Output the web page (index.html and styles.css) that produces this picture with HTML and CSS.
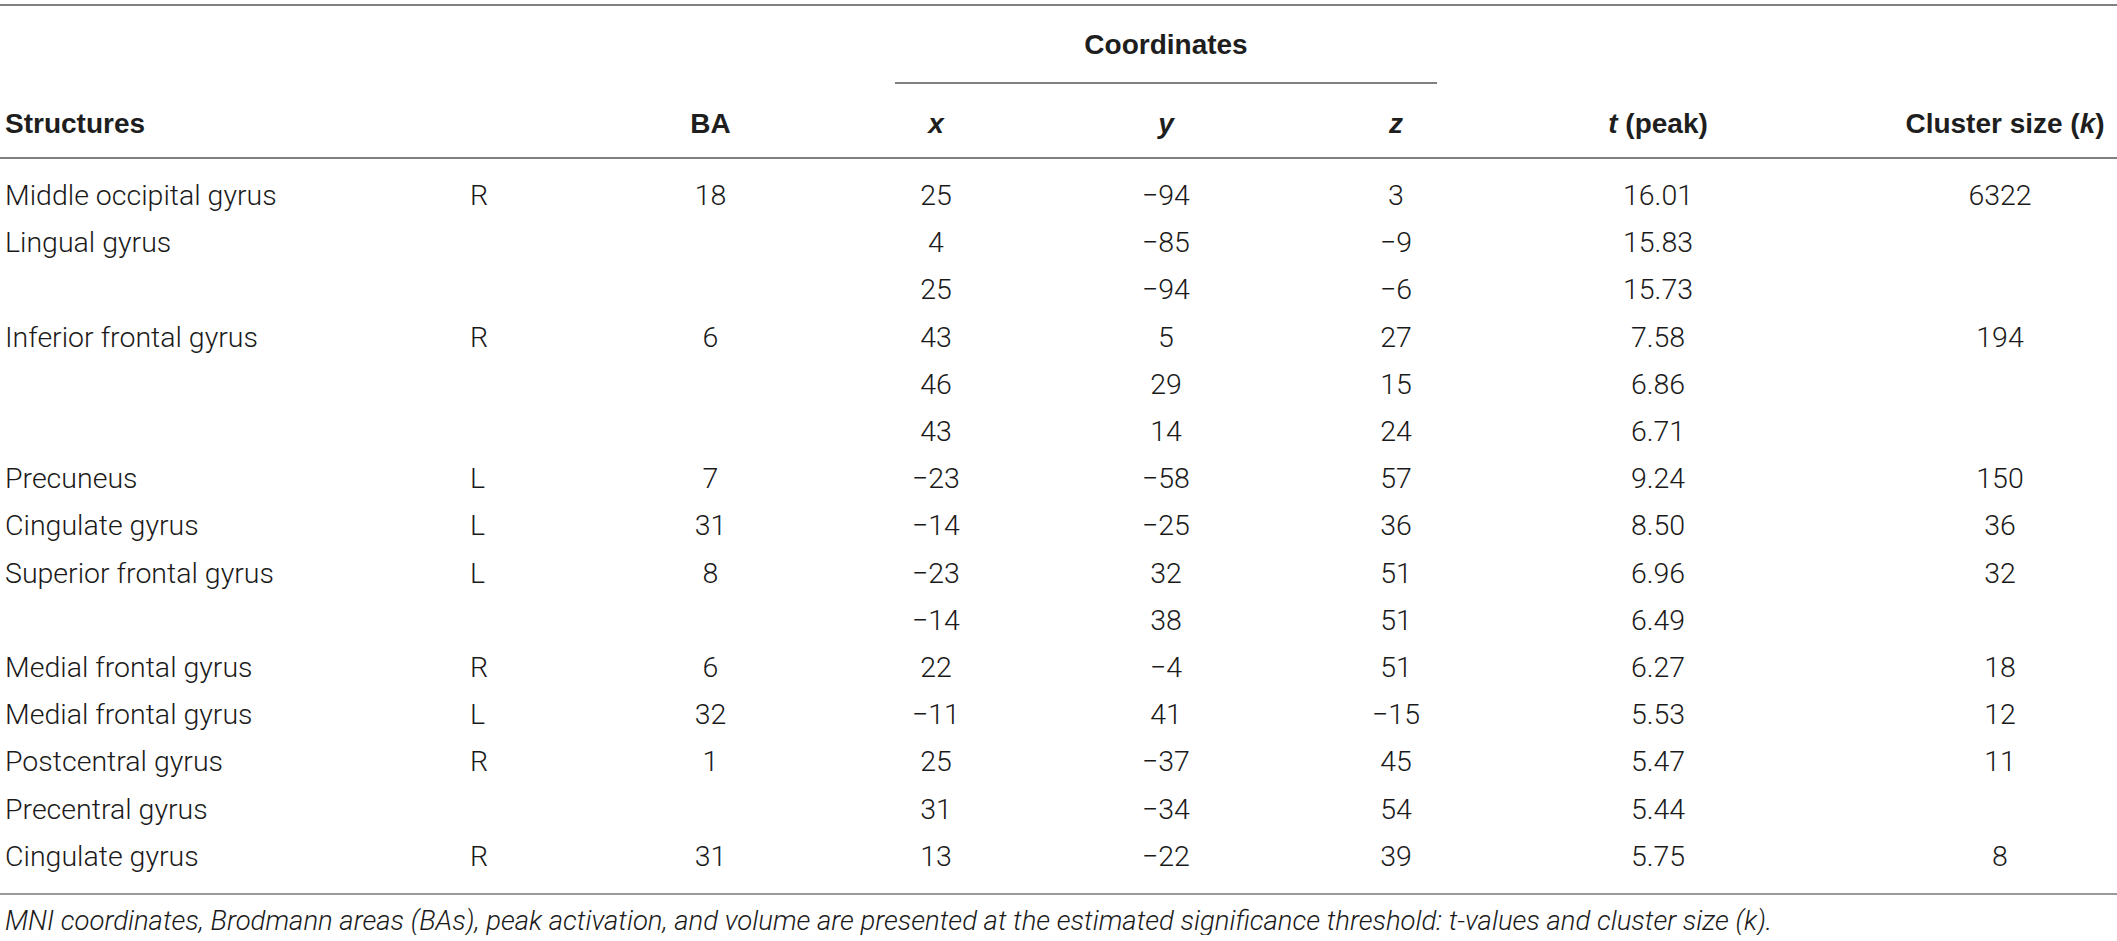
FILE: index.html
```html
<!DOCTYPE html>
<html lang="en">
<head>
<meta charset="utf-8">
<title>Activation clusters</title>
<link rel="stylesheet" href="styles.css">
</head>
<body>
<table class="results">
  <colgroup>
    <col class="c-name">
    <col class="c-hemi">
    <col class="c-ba">
    <col class="c-axis">
    <col class="c-axis">
    <col class="c-axis">
    <col class="c-t">
    <col class="c-k">
  </colgroup>
  <thead>
    <tr>
      <th rowspan="2" class="tall name-head">Structures</th>
      <th rowspan="2" class="tall"></th>
      <th rowspan="2" class="tall">BA</th>
      <th colspan="3" class="coord-group"><div class="coord-label">Coordinates</div></th>
      <th rowspan="2" class="tall"><i>t</i> (peak)</th>
      <th rowspan="2" class="tall k-head">Cluster size (<i>k</i>)</th>
    </tr>
    <tr>
      <th class="axis">x</th>
      <th class="axis">y</th>
      <th class="axis">z</th>
    </tr>
  </thead>
  <tbody>
    <tr><td class="name">Middle occipital gyrus</td><td class="hemi">R</td><td>18</td><td>25</td><td>&minus;94</td><td>3</td><td>16.01</td><td class="k">6322</td></tr>
    <tr><td class="name">Lingual gyrus</td><td class="hemi"></td><td></td><td>4</td><td>&minus;85</td><td>&minus;9</td><td>15.83</td><td class="k"></td></tr>
    <tr><td class="name"></td><td class="hemi"></td><td></td><td>25</td><td>&minus;94</td><td>&minus;6</td><td>15.73</td><td class="k"></td></tr>
    <tr><td class="name">Inferior frontal gyrus</td><td class="hemi">R</td><td>6</td><td>43</td><td>5</td><td>27</td><td>7.58</td><td class="k">194</td></tr>
    <tr><td class="name"></td><td class="hemi"></td><td></td><td>46</td><td>29</td><td>15</td><td>6.86</td><td class="k"></td></tr>
    <tr><td class="name"></td><td class="hemi"></td><td></td><td>43</td><td>14</td><td>24</td><td>6.71</td><td class="k"></td></tr>
    <tr><td class="name">Precuneus</td><td class="hemi">L</td><td>7</td><td>&minus;23</td><td>&minus;58</td><td>57</td><td>9.24</td><td class="k">150</td></tr>
    <tr><td class="name">Cingulate gyrus</td><td class="hemi">L</td><td>31</td><td>&minus;14</td><td>&minus;25</td><td>36</td><td>8.50</td><td class="k">36</td></tr>
    <tr><td class="name">Superior frontal gyrus</td><td class="hemi">L</td><td>8</td><td>&minus;23</td><td>32</td><td>51</td><td>6.96</td><td class="k">32</td></tr>
    <tr><td class="name"></td><td class="hemi"></td><td></td><td>&minus;14</td><td>38</td><td>51</td><td>6.49</td><td class="k"></td></tr>
    <tr><td class="name">Medial frontal gyrus</td><td class="hemi">R</td><td>6</td><td>22</td><td>&minus;4</td><td>51</td><td>6.27</td><td class="k">18</td></tr>
    <tr><td class="name">Medial frontal gyrus</td><td class="hemi">L</td><td>32</td><td>&minus;11</td><td>41</td><td>&minus;15</td><td>5.53</td><td class="k">12</td></tr>
    <tr><td class="name">Postcentral gyrus</td><td class="hemi">R</td><td>1</td><td>25</td><td>&minus;37</td><td>45</td><td>5.47</td><td class="k">11</td></tr>
    <tr><td class="name">Precentral gyrus</td><td class="hemi"></td><td></td><td>31</td><td>&minus;34</td><td>54</td><td>5.44</td><td class="k"></td></tr>
    <tr><td class="name">Cingulate gyrus</td><td class="hemi">R</td><td>31</td><td>13</td><td>&minus;22</td><td>39</td><td>5.75</td><td class="k">8</td></tr>
  </tbody>
</table>
<p class="note">MNI coordinates, Brodmann areas (BAs), peak activation, and volume are presented at the estimated significance threshold: t-values and cluster size (k).</p>
</body>
</html>
```

FILE: styles.css
```css
html, body {
  margin: 0;
  padding: 0;
  background: #ffffff;
}

body {
  font-family: Roboto, "Liberation Sans", Arial, sans-serif;
  font-weight: 300;
  color: #1a1a1a;
}

.results {
  width: 2117px;
  table-layout: fixed;
  border-collapse: collapse;
  margin-top: 4px;
  font-size: 28.5px;
}

.c-name { width: 400px; }
.c-hemi { width: 200px; }
.c-ba { width: 221px; }
.c-axis { width: 230px; }
.c-t { width: 294px; }
.c-k { width: 312px; }

.results thead tr:first-child th {
  border-top: 2px solid #808080;
}

.results th {
  padding: 0;
  font-family: "Liberation Sans", Arial, sans-serif;
  font-size: 28px;
  font-weight: bold;
  line-height: 28px;
  text-align: center;
  color: #1e1e1e;
}

.results th.tall {
  vertical-align: bottom;
  padding-bottom: 19px;
  border-bottom: 2px solid #808080;
}

.results th.name-head {
  text-align: left;
  padding-left: 5px;
}

.results th.k-head {
  padding-left: 88px;
}

.results th.coord-group {
  vertical-align: top;
}

.coord-label {
  margin: 0 74px;
  padding: 25px 0 23px;
  border-bottom: 2px solid #808080;
}

.results th.axis {
  font-style: italic;
  padding-top: 26px;
  padding-bottom: 19px;
  border-bottom: 2px solid #808080;
}

.results td {
  padding: 0;
  line-height: 47.2px;
  text-align: center;
  white-space: nowrap;
}

.results td.name {
  text-align: left;
  padding-left: 5px;
}

.results td.hemi {
  text-align: left;
  padding-left: 70px;
}

.results td.k {
  padding-left: 78px;
}

.results tbody tr:first-child td {
  padding-top: 13px;
}

.results tbody tr:last-child td {
  padding-bottom: 13px;
  border-bottom: 2px solid #9a9a9a;
}

.note {
  margin: 0;
  padding: 12px 5px 0;
  font-style: italic;
  font-size: 27.5px;
  line-height: 28px;
  color: #1a1a1a;
}
```
